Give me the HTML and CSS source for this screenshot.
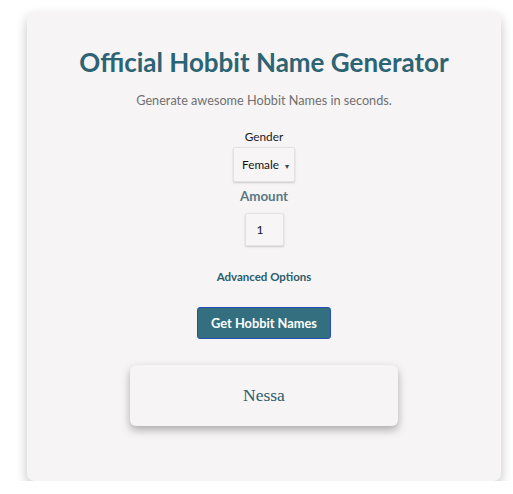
FILE: index.html
```html
<!DOCTYPE html>
<html>
<head>
<meta charset="utf-8">
<link rel="stylesheet" href="styles.css">
</head>
<body>
<div class="card">
  <h1 class="title">Official Hobbit Name Generator</h1>
  <p class="subtitle">Generate awesome Hobbit Names in seconds.</p>
  <label class="gender-label">Gender</label>
  <div class="select"><span>Female</span><span class="caret">▾</span></div>
  <label class="amount-label">Amount</label>
  <div class="input">1</div>
  <a class="advanced">Advanced Options</a>
  <button class="btn">Get Hobbit Names</button>
  <div class="result">Nessa</div>
</div>
</body>
</html>
```
FILE: styles.css
```css
html, body { margin: 0; padding: 0; background: #fff; }
body { padding: 12px 12px 0 27px; font-family: Lato, sans-serif; }
.card {
  width: 474px;
  height: 469px;
  box-sizing: border-box;
  background: #f6f4f5;
  border-radius: 7px;
  box-shadow: 0 5px 12px rgba(0,0,0,0.24);
  display: flex;
  flex-direction: column;
  align-items: center;
  padding-top: 34px;
}
.title {
  margin: 0;
  font-family: Lato, sans-serif;
  font-weight: 700;
  font-size: 26px;
  line-height: 32px;
  color: #2d6474;
}
.subtitle {
  margin: 13px 0 0;
  font-size: 12.7px;
  line-height: 18px;
  color: #707070;
}
.gender-label {
  margin-top: 20px;
  font-size: 11.8px;
  line-height: 16px;
  color: #1a1a1a;
}
.select {
  margin-top: 2px;
  width: 62px;
  height: 35px;
  box-sizing: border-box;
  border: 1px solid #e4e2e3;
  border-radius: 2px;
  box-shadow: 0 1px 2px rgba(0,0,0,0.18);
  background: #f7f5f6;
  display: flex;
  align-items: center;
  justify-content: center;
  gap: 6px;
  padding-left: 3px;
  font-size: 11.8px;
  color: #111;
}
.caret { font-size: 8px; color: #444; padding-top: 2px; }
.amount-label {
  margin-top: 5px;
  font-size: 13.4px;
  line-height: 18px;
  font-weight: 700;
  color: #5a7882;
}
.input {
  margin-top: 8px;
  width: 39px;
  height: 33px;
  box-sizing: border-box;
  border: 1px solid #e4e2e3;
  border-radius: 2px;
  box-shadow: 0 1px 2px rgba(0,0,0,0.18);
  background: #f7f5f6;
  display: flex;
  align-items: center;
  padding-left: 11px;
  font-size: 12px;
  color: #111;
}
.advanced {
  margin-top: 23px;
  font-size: 11.5px;
  line-height: 16px;
  font-weight: 700;
  color: #2b5d6c;
}
.btn {
  margin-top: 22px;
  width: 134px;
  height: 32px;
  box-sizing: border-box;
  background: #336f7e;
  border: 1px solid #2450b5;
  border-radius: 3px;
  color: #fff;
  font-family: Lato, sans-serif;
  font-weight: 700;
  font-size: 12.8px;
  padding: 0;
}
.result {
  margin-top: 26px;
  width: 268px;
  height: 61px;
  box-sizing: border-box;
  background: #f6f4f5;
  border-radius: 6px;
  box-shadow: 0 4px 8px rgba(0,0,0,0.3);
  display: flex;
  align-items: center;
  justify-content: center;
  font-family: "Liberation Serif", serif;
  font-size: 17.5px;
  color: #2a5d6c;
}
```
